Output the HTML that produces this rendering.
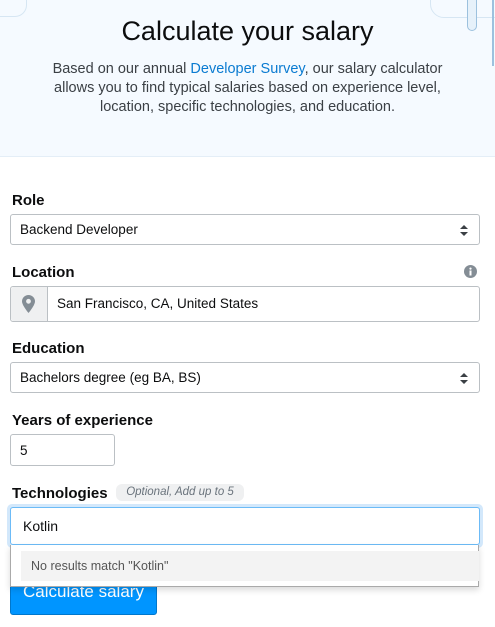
<!DOCTYPE html><html><head><style>
body{margin:0;width:495px;height:627px;overflow:hidden;background:#fff;font-family:"Liberation Sans",Arial,sans-serif;position:relative}
.a{position:absolute}
.hdr{left:0;top:0;width:495px;height:156px;background:#f5faff;border-bottom:1px solid #e4eef7}
h1{position:absolute;margin:0;left:0;width:495px;top:16px;text-align:center;font-weight:normal;font-size:27px;color:#0c0d0e}
.p{left:38px;width:419px;top:60px;text-align:center;font-size:14.5px;line-height:19px;color:#3b4045}
.p span{color:#0a7bd1}
.lbl{font-weight:bold;font-size:15px;color:#0c0d0e}
.box{border:1px solid #bbc0c4;border-radius:3px;background:#fff;box-sizing:border-box;font-size:13.5px;color:#0c0d0e}
</style></head><body>
<div class="a hdr"></div>
<div class="a" style="left:-20px;top:-40px;width:45px;height:55px;border:1px solid #d6e6f3;border-radius:12px"></div>
<div class="a" style="left:430px;top:-40px;width:90px;height:56px;border:1px solid #d6e6f3;border-radius:14px"></div>
<div class="a" style="left:467px;top:0;width:8px;height:30px;border:1px solid #9cc1de;border-top:none;border-radius:0 0 5px 5px;background:#e6f1fa"></div>
<div class="a" style="left:492px;top:0;width:2px;height:66px;background:#9cc1de"></div>
<h1>Calculate your salary</h1>
<div class="a p">Based on our annual <span>Developer Survey</span>, our salary calculator allows you to find typical salaries based on experience level, location, specific technologies, and education.</div>

<div class="a lbl" style="left:12px;top:192px">Role</div>
<div class="a box" style="left:10px;top:214px;width:470px;height:31px;padding:7px 9px">Backend Developer
<svg class="a" style="right:11px;top:10px" width="8" height="11"><path d="M0 4L4 0L8 4Z M0 7L4 11L8 7Z" fill="#3b4045"/></svg></div>

<div class="a lbl" style="left:12px;top:264px">Location</div>
<svg class="a" style="left:464px;top:265px" width="13" height="13"><circle cx="6.5" cy="6.5" r="6.5" fill="#848d95"/><rect x="5.5" y="5.5" width="2" height="5" fill="#fff"/><circle cx="6.5" cy="3.6" r="1.1" fill="#fff"/></svg>
<div class="a box" style="left:10px;top:286px;width:470px;height:36px"></div>
<div class="a" style="left:11px;top:287px;width:36px;height:34px;background:#eff0f1;border-right:1px solid #bbc0c4;border-radius:3px 0 0 3px"></div>
<svg class="a" style="left:22px;top:295px" width="13" height="18"><path d="M6.5 0C3 0 0 2.8 0 6.3C0 10.5 6.5 18 6.5 18S13 10.5 13 6.3C13 2.8 10 0 6.5 0Z" fill="#848d95"/><circle cx="6.5" cy="6.3" r="2.4" fill="#eff0f1"/></svg>
<div class="a" style="left:57px;top:296px;font-size:13.5px;color:#0c0d0e">San Francisco, CA, United States</div>

<div class="a lbl" style="left:12px;top:340px">Education</div>
<div class="a box" style="left:10px;top:362px;width:470px;height:31px;padding:7px 9px">Bachelors degree (eg BA, BS)
<svg class="a" style="right:11px;top:10px" width="8" height="11"><path d="M0 4L4 0L8 4Z M0 7L4 11L8 7Z" fill="#3b4045"/></svg></div>

<div class="a lbl" style="left:12px;top:412px">Years of experience</div>
<div class="a box" style="left:10px;top:434px;width:105px;height:32px;padding:8px 9px">5</div>

<div class="a lbl" style="left:12px;top:485px">Technologies</div>
<div class="a" style="left:116px;top:484px;width:128px;height:17px;background:#eff0f1;border-radius:6px;font-size:11.5px;font-style:italic;color:#6a737c;line-height:17px;text-align:center">Optional, Add up to 5</div>

<div class="a" style="left:10px;top:570px;width:147px;height:45px;background:#0095ff;border-radius:3px;border:1px solid #07c;box-sizing:border-box"></div>
<div class="a" style="left:23px;top:582px;font-size:17px;color:#fff">Calculate salary</div>

<div class="a" style="left:7px;top:504px;width:476px;height:44px;background:#d3e8fb;border-radius:5px"></div>
<div class="a box" style="left:10px;top:507px;width:470px;height:38px;border-color:#6cbbf7;padding:10px 12px;font-size:14px">Kotlin</div>
<div class="a" style="left:10px;top:545px;width:469px;height:42px;background:#fff;border:1px solid #aaa;border-top:none;box-sizing:border-box;box-shadow:0 3px 6px rgba(0,0,0,.15)"></div>
<div class="a" style="left:21px;top:551px;width:458px;height:30px;background:#f3f3f3;font-size:12.5px;color:#555;line-height:30px;padding-left:10px;box-sizing:border-box">No results match "Kotlin"</div>
</body></html>
